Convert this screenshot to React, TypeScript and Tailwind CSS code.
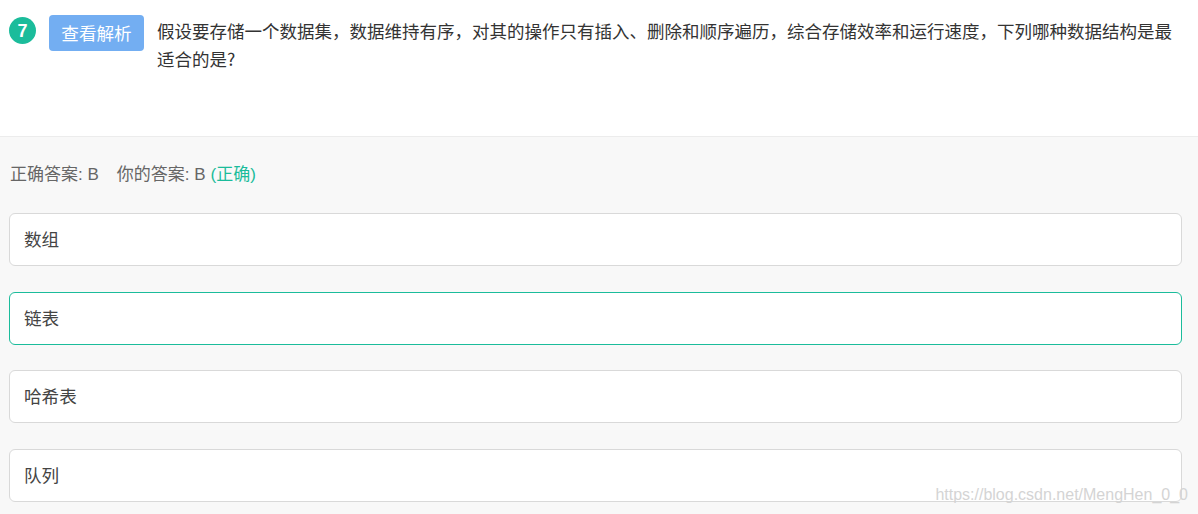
import React from "react";

const options = ["数组", "链表", "哈希表", "队列"];

export default function App() {
  return (
    <div
      className="relative w-[1198px] h-[514px] overflow-hidden bg-[#f8f8f8]"
      style={{ fontFamily: '"Noto Sans CJK SC", "Noto Sans", sans-serif' }}
    >
      <div className="h-[137px] bg-white border-b border-[#ececec] flex items-start pt-[15px] pl-[9px]">
        <div className="mt-[2px] w-[27px] h-[27px] shrink-0 rounded-full bg-[#1bbc9b] text-white flex items-center justify-center text-[18px] font-semibold leading-none" style={{ fontFamily: '"Liberation Sans", Arial, sans-serif' }}>
          7
        </div>
        <div className="ml-[13px] w-[95px] h-[36px] shrink-0 rounded-[4px] bg-[#73aef2] text-white flex items-center justify-center text-[17.6px] leading-none">
          查看解析
        </div>
        <div className="ml-[13px] mt-[2px] w-[1030px] text-[17.5px] leading-[28px] text-[#333]">
          假设要存储一个数据集，数据维持有序，对其的操作只有插入、删除和顺序遍历，综合存储效率和运行速度，下列哪种数据结构是最适合的是?
        </div>
      </div>
      <div className="pl-[9px] pr-[16px] pt-[26px]">
        <div
          className="pl-[1px] h-[24px] flex items-center text-[17px] text-[#666] leading-[24px] whitespace-pre"
          style={{ fontFamily: '"Liberation Sans", "Noto Sans CJK SC", sans-serif' }}
        >
          <span>正确答案: B</span>
          <span className="ml-[18px]">你的答案: B</span>
          <span className="ml-[5px] text-[#1bbc9b]">(正确)</span>
        </div>
        <div className="mt-[26px] flex flex-col gap-[25.5px]">
          {options.map((o, i) => (
            <div
              key={o}
              className={
                i === 1
                  ? "h-[53px] rounded-[6px] bg-white border border-[#1bbc9b] flex items-center pl-[14px] text-[17.6px] text-[#444]"
                  : "h-[53px] rounded-[6px] bg-white border border-[#d9d9d9] flex items-center pl-[14px] text-[17.6px] text-[#444]"
              }
            >
              {o}
            </div>
          ))}
        </div>
      </div>
      <div
        className="absolute right-[10px] bottom-[9px] text-[16px] leading-[20px] text-[#d4d4d4]"
        style={{ fontFamily: '"Liberation Sans", Arial, sans-serif' }}
      >
        https://blog.csdn.net/MengHen_0_0
      </div>
    </div>
  );
}
